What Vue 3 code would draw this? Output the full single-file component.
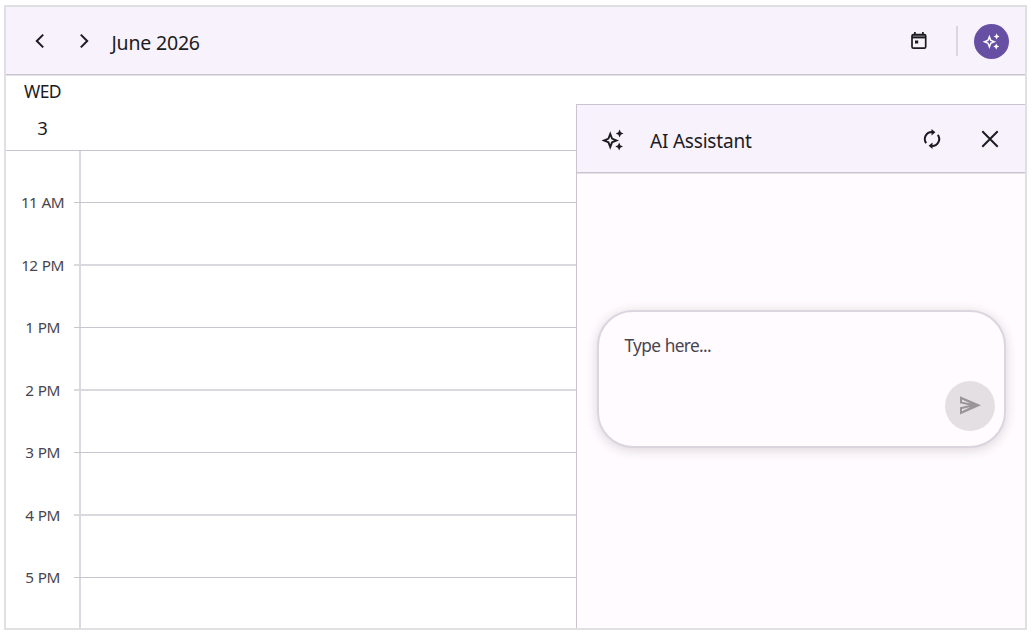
<template>
  <div class="scheduler">
    <header class="toolbar">
      <button class="icon-btn prev" aria-label="Previous">
        <svg width="24" height="24" viewBox="0 0 24 24"><path d="M15.2 5.6 L8.8 12 L15.2 18.4" /></svg>
      </button>
      <button class="icon-btn next" aria-label="Next">
        <svg width="24" height="24" viewBox="0 0 24 24"><path d="M8.8 5.6 L15.2 12 L8.8 18.4" /></svg>
      </button>
      <span class="title">June 2026</span>
      <button class="icon-btn today" aria-label="Today">
        <svg width="18" height="20" viewBox="0 0 18 20">
          <rect x="2" y="3.5" width="13.7" height="13.6" rx="1.4" />
          <path d="M2 4.2h13.7v3.2H2z" class="solid" />
          <path d="M2.9 5.3h11.9" class="gap" />
          <path d="M4.9 1v3M12.9 1v3" />
          <path d="M5 9.5h3.2v3H5z" class="solid" />
        </svg>
      </button>
      <span class="separator"></span>
      <button class="assist-btn" aria-label="AI Assistant">
        <svg width="17" height="17" viewBox="0 0 24 24">
          <path :d="sparkle" fill-rule="evenodd" />
        </svg>
      </button>
    </header>

    <div class="day-header">
      <span class="weekday">WED</span>
      <span class="date">3</span>
    </div>

    <div class="time-grid">
      <div class="hour first"></div>
      <div
        v-for="(hour, i) in hours"
        :key="hour"
        class="hour"
        :class="i % 2 ? 'soft' : 'sharp'"
      >
        <span class="hour-label">{{ hour }}</span>
      </div>
    </div>

    <section class="assist-panel">
      <div class="panel-header">
        <svg class="panel-icon" width="22" height="22" viewBox="0 0 24 24">
          <path :d="sparkle" fill-rule="evenodd" />
        </svg>
        <span class="panel-title">AI Assistant</span>
        <button class="icon-btn refresh" aria-label="Refresh">
          <svg width="18" height="22" viewBox="0 0 18 22">
            <path d="M3.2 15.2 A7 7 0 0 1 9.5 4.1 M14.8 6.8 A7 7 0 0 1 8.5 17.9" />
            <path d="M8.5 .9 L12.4 4.2 L8.5 7.4z M9.5 14.6 L5.6 17.8 L9.5 21.1z" class="fill" />
          </svg>
        </button>
        <button class="icon-btn close" aria-label="Close">
          <svg width="18" height="18" viewBox="0 0 18 18"><path d="M1.3 1.3 L16.7 16.7 M16.7 1.3 L1.3 16.7" /></svg>
        </button>
      </div>
      <div class="panel-body">
        <div class="editor">
          <span class="placeholder">Type here...</span>
          <button class="send-btn" aria-label="Send" disabled>
            <svg width="22" height="19" viewBox="0 0 22 19">
              <path
                d="M1 .2 L22 9.3 L1 18.4 V11.3 L10 9.3 L1 7.3z M3 3.4 V5.7 L11.5 7.6z M3 15.2 V12.9 L11.5 11z"
                fill-rule="evenodd"
              />
            </svg>
          </button>
        </div>
      </div>
    </section>
  </div>
</template>

<script setup>
const hours = ['11 AM', '12 PM', '1 PM', '2 PM', '3 PM', '4 PM', '5 PM'];

// Large hollow star with two small ones on its right
const sparkle =
  'M9 2.4 L11.8 9.7 L18.6 12.5 L11.8 15.3 L9 22.6 L6.2 15.3 L-.6 12.5 L6.2 9.7z ' +
  'M9 8.3 L7.8 11.3 L4.9 12.5 L7.8 13.7 L9 16.7 L10.2 13.7 L13.1 12.5 L10.2 11.3z ' +
  'M19.2 .5 L20.5 3.6 L23.4 4.9 L20.5 6.2 L19.2 9.3 L17.9 6.2 L15 4.9 L17.9 3.6z ' +
  'M18.7 14.7 L20 17.8 L22.9 19.1 L20 20.4 L18.7 23.5 L17.4 20.4 L14.5 19.1 L17.4 17.8z';
</script>

<style>
body {
  margin: 0;
  background: #fff;
}
</style>

<style scoped>
.scheduler {
  position: relative;
  box-sizing: border-box;
  width: 1023px;
  height: 625px;
  margin: 5px 0 0 4px;
  border: 2px solid #e0dfe2;
  overflow: hidden;
  font-family: 'Noto Sans', 'Open Sans', sans-serif;
  color: #1c1b1f;
  background: #fff;
}

button {
  padding: 0;
  border: none;
  background: none;
}

svg {
  display: block;
  overflow: visible;
}

.icon-btn svg {
  fill: none;
  stroke: #1c1b1f;
  stroke-width: 2;
}

/* Toolbar */
.toolbar {
  display: flex;
  align-items: center;
  box-sizing: border-box;
  height: 68px;
  padding: 1px 16px 0 22px;
  background: #f7f2fb;
  border-bottom: 1px solid #cac4d0;
  box-shadow: 0 1px 0 #e4e1e7;
}

.next {
  margin-left: 20px;
}

.title {
  margin: 4px 0 0 15.5px;
  font-size: 19.5px;
  line-height: 26px;
  letter-spacing: -0.2px;
}

.today {
  margin-left: auto;
}

.today svg {
  stroke-width: 1.7;
}

.today .solid {
  fill: #1c1b1f;
  stroke: none;
}

.today .gap {
  stroke: #77747b;
  stroke-width: 1;
}

.separator {
  width: 2px;
  height: 30px;
  margin: 0 16px 0 28px;
  background: #dcd6e1;
}

.assist-btn {
  display: flex;
  align-items: center;
  justify-content: center;
  width: 35px;
  height: 35px;
  border-radius: 50%;
  background: #6750a4;
}

.assist-btn svg {
  fill: #fff;
}

/* Day header */
.day-header {
  display: flex;
  flex-direction: column;
  align-items: center;
  box-sizing: border-box;
  width: 100%;
  height: 76px;
  padding: 4px 946px 0 0;
  border-bottom: 1px solid #cac4d0;
}

.weekday {
  font-size: 17.5px;
  line-height: 24px;
  letter-spacing: -0.6px;
}

.date {
  margin-top: 13px;
  font-size: 18.5px;
  line-height: 24px;
}

/* Time grid */
.time-grid {
  position: relative;
  height: 478px;
}

.time-grid::before {
  content: '';
  position: absolute;
  left: 73px;
  top: 0;
  bottom: 0;
  width: 2px;
  background: #dbd8df;
}

.hour {
  position: relative;
  height: 62.5px;
}

.hour.first {
  height: 51px;
}

.hour::before {
  content: '';
  position: absolute;
  left: 68px;
  right: 0;
  top: 0;
  height: 1px;
  background: #cac4d0;
}

.hour.first::before {
  display: none;
}

.hour.soft::before {
  top: -0.5px;
  height: 2px;
  background: #dbd8df;
}

.hour-label {
  display: block;
  width: 73px;
  font-size: 15.3px;
  line-height: 22px;
  letter-spacing: -0.6px;
  word-spacing: 1px;
  text-align: center;
  color: #49454f;
  transform: translateY(-11px);
}

/* Assistant panel */
.assist-panel {
  position: absolute;
  top: 97px;
  right: 0;
  bottom: 0;
  box-sizing: border-box;
  width: 449px;
  border: 1px solid #cac4d0;
  border-width: 1px 0 0 1px;
  background: #fffbfe;
}

.panel-header {
  display: flex;
  align-items: center;
  box-sizing: border-box;
  height: 68px;
  padding: 0 26.5px 0 25px;
  background: #f7f2fb;
  border-bottom: 1px solid #cac4d0;
  box-shadow: 0 1px 0 #e4e1e7;
}

.panel-icon {
  margin-top: 3px;
  fill: #1c1b1f;
}

.panel-title {
  margin: 5px 0 0 26px;
  font-size: 19px;
  line-height: 26px;
  letter-spacing: -0.2px;
}

.refresh {
  margin-left: auto;
}

.refresh .fill {
  fill: #1c1b1f;
  stroke: none;
}

.close {
  margin-left: 40px;
}

.panel-body {
  padding: 137px 19px 0 20px;
}

.editor {
  position: relative;
  box-sizing: border-box;
  height: 138px;
  border: 2px solid #dad5de;
  border-radius: 36px;
  background: #fffbfe;
  box-shadow: 0 2px 12px rgba(60, 40, 60, 0.18);
}

.placeholder {
  display: block;
  padding: 22px 0 0 25.5px;
  font-size: 17.3px;
  line-height: 24px;
  letter-spacing: -0.65px;
  word-spacing: 0.5px;
  color: #49454f;
}

.send-btn {
  position: absolute;
  right: 9px;
  bottom: 15px;
  display: flex;
  align-items: center;
  justify-content: center;
  width: 50px;
  height: 50px;
  padding-bottom: 2px;
  border-radius: 50%;
  background: #e4dfe3;
}

.send-btn svg {
  fill: #99969a;
}
</style>
